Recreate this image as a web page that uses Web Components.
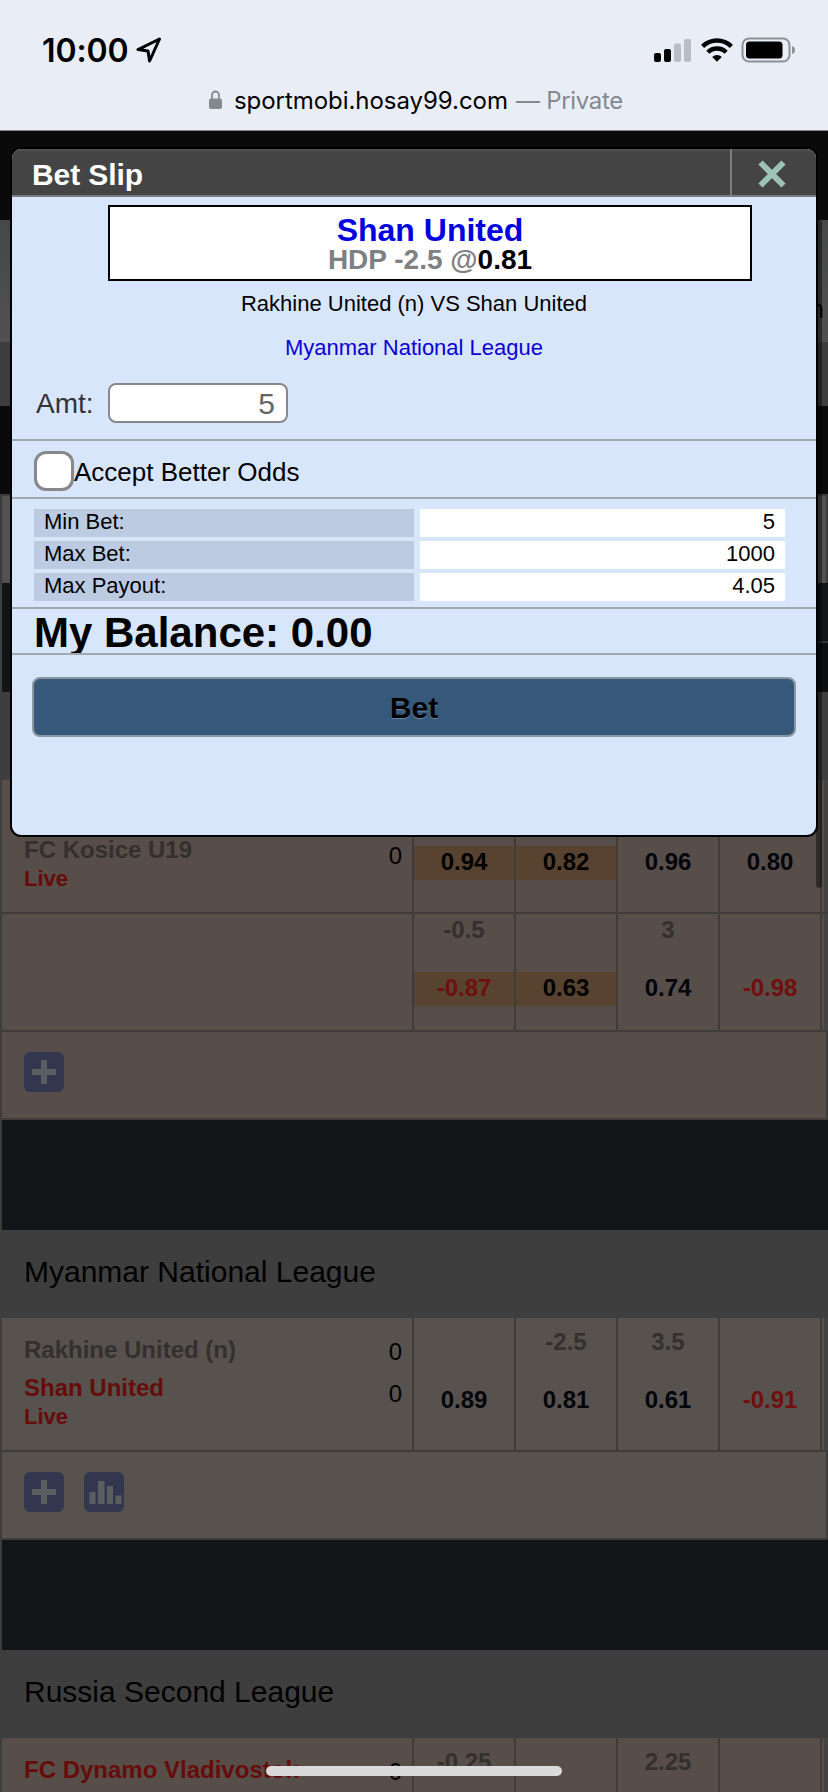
<!DOCTYPE html>
<html lang="en">
<head>
<meta charset="utf-8">
<title>Bet Slip</title>
<style>
  html {
    height: 1792px;
    overflow: hidden;
  }
  body {
    margin: 0;
    width: 828px;
    height: 1792px;
    overflow: hidden;
    position: relative;
    background: #131418;
    font-family: "Liberation Sans", Arial, sans-serif;
  }
</style>
</head>
<body>
<status-bar time="10:00" host="sportmobi.hosay99.com" mode="— Private"></status-bar>
<page-top>n</page-top>

<league-block>
  <match-row away="FC Kosice U19" away-score="0" live
    odds="|0.94|hot,|0.82|hot,|0.96|,|0.80|"></match-row>
  <match-row odds="-0.5|-0.87|hot,|0.63|hot,3|0.74|,|-0.98|" extra></match-row>
  <action-row icons="plus"></action-row>
</league-block>

<league-block name="Myanmar National League" style="--row: #57524e">
  <match-row home="Rakhine United (n)" away="Shan United" home-score="0" away-score="0" favourite="away" live
    odds="|0.89|,-2.5|0.81|,3.5|0.61|,|-0.91|"></match-row>
  <action-row icons="plus,chart"></action-row>
</league-block>

<league-block name="Russia Second League" last>
  <match-row home="FC Dynamo Vladivostok" home-score="0" favourite="home" cut
    odds="-0.25||,||,2.25||,||"></match-row>
</league-block>

<scroll-thumb></scroll-thumb>

<bet-slip heading="Bet Slip">
  <bet-pick team="Shan United" line="HDP -2.5 @" price="0.81"></bet-pick>
  <bet-match league="Myanmar National League">Rakhine United (n) VS Shan United</bet-match>
  <bet-amount value="5">Amt:</bet-amount>
  <bet-check>Accept Better Odds</bet-check>
  <bet-limits rows="Min Bet:|5,Max Bet:|1000,Max Payout:|4.05"></bet-limits>
  <bet-balance>My Balance: 0.00</bet-balance>
  <bet-button>Bet</bet-button>
</bet-slip>

<home-indicator></home-indicator>

<script>
class BaseElement extends HTMLElement {
  constructor() {
    super();
    this.attachShadow({ mode: "open" });
  }

  connectedCallback() {
    this.shadowRoot.innerHTML = this.render();
  }

  attr(name) {
    return this.getAttribute(name) || "";
  }
}

class StatusBar extends BaseElement {
  render() {
    return `
      <style>
        :host {
          display: block;
          height: 130px;
          border-bottom: 1px solid #85888c;
          background: #e9eef6;
          font-family: Inter, sans-serif;
        }
        .top {
          display: flex;
          align-items: center;
          height: 50px;
          padding: 25px 32px 0 42px;
        }
        .time {
          width: 88px;
          font-size: 32px;
          font-weight: 600;
          letter-spacing: -0.1px;
          white-space: nowrap;
        }
        .arrow { margin-left: 6px; }
        .icons { margin-left: auto; display: block; }
        .url {
          display: flex;
          align-items: center;
          height: 50px;
          padding-left: 209px;
          font-size: 24px;
          white-space: nowrap;
        }
        .host { margin-left: 12px; width: 282px; letter-spacing: -0.05px; }
        .mode { color: #85888f; letter-spacing: -0.3px; }
      </style>
      <div class="top">
        <span class="time">${this.attr("time")}</span>
        <svg class="arrow" width="26" height="26" viewBox="0 0 26 26">
          <path d="M23.500 2 L2 12.600 L12 14 L13.600 24 Z" fill="none" stroke="#000" stroke-width="3" stroke-linejoin="round"/>
        </svg>
        <svg class="icons" width="142" height="26" viewBox="0 0 142 26">
          <rect x="0" y="16" width="7" height="9" rx="2"/>
          <rect x="10" y="12" width="7" height="13" rx="2"/>
          <rect x="20" y="6.500" width="7" height="18.500" rx="2" fill="#b9bec6"/>
          <rect x="30" y="2" width="7" height="23" rx="2" fill="#b9bec6"/>
          <g fill="none" stroke="#000" stroke-width="4.400">
            <path d="M48.600 9.400 a20.500 20.500 0 0 1 28.800 0"/>
            <path d="M53.800 15.300 a13 13 0 0 1 18.400 0"/>
          </g>
          <path d="M58.200 20 a7 7 0 0 1 9.600 0 L63 24.800 Z"/>
          <rect x="88.500" y="1.500" width="47" height="23" rx="6.500" fill="none" stroke="#8d9096" stroke-width="2"/>
          <rect x="92" y="4.500" width="36.500" height="17" rx="3.500"/>
          <path d="M138 9 q3 1 3 4 t-3 4 Z" fill="#8d9096"/>
        </svg>
      </div>
      <div class="url">
        <svg width="13" height="20" viewBox="0 0 13 20">
          <path d="M3 9 V5.500 a3.500 4 0 0 1 7 0 V9" fill="none" stroke="#85888f" stroke-width="1.800"/>
          <rect y="8.500" width="13" height="10.500" rx="2" fill="#85888f"/>
        </svg>
        <span class="host">${this.attr("host")}</span>
        <span class="mode">${this.attr("mode")}</span>
      </div>
    `;
  }
}

// everything above the first visible match, mostly under the slip
class PageTop extends BaseElement {
  render() {
    return `
      <style>
        :host { display: block; }
        div { box-sizing: border-box; }
        .bar { height: 89px; background: #0a0a0a; }
        .tabs {
          height: 122px;
          padding: 75px 4px 0 0;
          text-align: right;
          font-size: 26px;
          line-height: 28px;
          background: linear-gradient(#464747, #515151);
        }
        .sub { height: 64px; background: #3d3d3d; }
        .gap { height: 88px; background: #0a0a0a; }
        .title { height: 89px; border: solid #3b3b3b; border-width: 2px 2px 0; background: #525252; }
        .head { height: 109px; border: solid #404040; border-width: 0 0 0 2px; background: linear-gradient(90deg, #131418 50%, transparent 50%), linear-gradient(#131418 0 58px, #333 58px 60px, #0e0f11 60px); }
        .league { height: 88px; background: #3e3e3e; }
      </style>
      <div class="bar"></div>
      <div class="tabs"><slot></slot></div>
      <div class="sub"></div>
      <div class="gap"></div>
      <div class="title"></div>
      <div class="head"></div>
      <div class="league"></div>
    `;
  }
}

class LeagueBlock extends BaseElement {
  render() {
    const name = this.attr("name");
    return `
      <style>
        :host { display: block; }
        h2 {
          margin: 0;
          height: 88px;
          padding-left: 24px;
          background: #3e3e3e;
          font-size: 30px;
          font-weight: normal;
          line-height: 84px;
        }
        .gap { height: 110px; border-left: 2px solid #3b3b3c; background: #131418; }
      </style>
      ${name ? `<h2>${name}</h2>` : ""}
      <slot></slot>
      ${this.hasAttribute("last") ? "" : `<div class="gap"></div>`}
    `;
  }
}

class MatchRow extends BaseElement {
  render() {
    const fav = this.attr("favourite");
    const cells = this.attr("odds").split(",").map(cell => {
      const [line, price, hot] = cell.split("|");
      const neg = price.startsWith("-") ? "neg" : "";
      return `
        <div class="cell">
          <div class="line">${line}</div>
          <div class="price ${neg} ${hot}">${price}</div>
        </div>`;
    }).join("");

    return `
      <style>
        :host {
          display: grid;
          grid-template-columns: 410px repeat(4, 102px) 8px;
          height: 132px;
          border-bottom: 2px solid #3f3d3b;
          border-left: 2px solid #3f3e3e;
          background: var(--row, #574d49);
          font-size: 24px;
          font-weight: bold;
        }
        :host([extra]) { height: 116px; }
        :host([cut]) { height: 54px; border-bottom: 0; overflow: hidden; }
        .match {
          display: flex;
          justify-content: space-between;
          padding: 13px 10px 0 22px;
        }
        .team { height: 38px; line-height: 38px; color: #33302e; }
        .match .team { white-space: nowrap; }
        .match .fav { color: #660c0a; }
        .live { font-size: 22px; line-height: 19px; color: #660c0a; }
        .score { margin-top: -1px; font-weight: normal; text-align: right; }
        .score div { height: 42px; line-height: 43px; }
        .cell {
          box-sizing: border-box;
          padding-top: 8px;
          border-left: 2px solid #3f3d3b;
          text-align: center;
          line-height: 32px;
        }
        :host([extra]) .cell { padding-top: 0; }
        .line { height: 32px; margin-bottom: 26px; color: #33302e; }
        .price { height: 34px; color: #03050b; }
        .hot { background: #574330; color: #000; }
        .neg { color: #700f0d; }
        .edge {
          border-left: 2px solid #3f3d3b;
          background: linear-gradient(90deg, transparent 2px, #454341 2px);
        }
      </style>
      <div class="match">
        <div>
          <div class="team ${fav === "home" ? "fav" : ""}">${this.attr("home")}</div>
          <div class="team ${fav === "away" ? "fav" : ""}">${this.attr("away")}</div>
          ${this.hasAttribute("live") ? `<div class="live">Live</div>` : ""}
        </div>
        <div class="score">
          <div>${this.attr("home-score")}</div>
          <div>${this.attr("away-score")}</div>
        </div>
      </div>
      ${cells}
      <div class="edge"></div>
    `;
  }
}

const ICONS = {
  plus: `<path d="M17 8 h6 v9 h9 v6 h-9 v9 h-6 v-9 h-9 v-6 h9 Z"/>`,
  chart: `<path d="M5.500 20 h6 v12 h-6 Z M14 9 h6.500 v23 h-6.500 Z M23 14 h6 v18 h-6 Z M31.500 23.500 h6 v8.500 h-6 Z"/>`
};

class ActionRow extends BaseElement {
  render() {
    return `
      <style>
        :host {
          box-sizing: border-box;
          display: flex;
          gap: 20px;
          height: 88px;
          padding: 20px 22px 0;
          border: solid #3f3d3b;
          border-width: 0 2px 2px;
          background: var(--row, #574d49);
        }
        svg { border-radius: 6px; background: #32364f; fill: #5a5e60; }
      </style>
      ${this.attr("icons").split(",").map(name =>
        `<svg width="40" height="40" viewBox="0 0 40 40">${ICONS[name]}</svg>`).join("")}
    `;
  }
}

class ScrollThumb extends BaseElement {
  render() {
    return `
      <style>
        :host {
          position: absolute;
          top: 220px;
          left: 816px;
          width: 6px;
          height: 668px;
          border-radius: 3px;
          background: rgba(0, 0, 0, 0.45);
        }
      </style>
    `;
  }
}

class BetSlip extends BaseElement {
  render() {
    return `
      <style>
        :host {
          box-sizing: border-box;
          position: absolute;
          top: 147px;
          left: 10px;
          width: 808px;
          height: 690px;
          border: 2px solid #000;
          border-radius: 11px;
          overflow: hidden;
          background: #d8e6fc;
        }
        header {
          display: flex;
          height: 46px;
          border-bottom: 2px solid #7b7d84;
          background: linear-gradient(#505050, #444 4px);
        }
        h1 {
          flex: 1;
          margin: 0;
          padding-left: 20px;
          font-size: 30px;
          letter-spacing: -0.1px;
          line-height: 51px;
          color: #fff;
        }
        .close {
          width: 84px;
          border-left: 2px solid #7b7d80;
        }
        svg { display: block; margin: 11px 0 0 26px; }
      </style>
      <header>
        <h1>${this.attr("heading")}</h1>
        <div class="close">
          <svg width="28" height="28" viewBox="0 0 28 28">
            <path d="M2.500 2.500 L25.500 25.500 M25.500 2.500 L2.500 25.500" stroke="#9cc3b5" stroke-width="6"/>
          </svg>
        </div>
      </header>
      <slot></slot>
    `;
  }
}

class BetPick extends BaseElement {
  render() {
    return `
      <style>
        :host {
          box-sizing: border-box;
          display: block;
          width: 644px;
          height: 76px;
          margin: 8px 0 0 96px;
          padding-top: 4px;
          border: 2px solid #000;
          background: #fff;
          text-align: center;
          font-weight: bold;
        }
        .team { font-size: 32px; line-height: 38px; color: #0000e0; }
        .line { font-size: 28px; line-height: 21px; color: #808080; }
        b { color: #000; }
      </style>
      <div class="team">${this.attr("team")}</div>
      <div class="line">${this.attr("line")}<b>${this.attr("price")}</b></div>
    `;
  }
}

class BetMatch extends BaseElement {
  render() {
    return `
      <style>
        :host {
          display: block;
          padding-top: 1px;
          text-align: center;
          font-size: 22px;
          line-height: 44px;
        }
        .league { color: #0a00d6; }
      </style>
      <div><slot></slot></div>
      <div class="league">${this.attr("league")}</div>
    `;
  }
}

class BetAmount extends BaseElement {
  render() {
    return `
      <style>
        :host {
          display: flex;
          height: 56px;
          padding: 13px 0 0 24px;
          border-bottom: 2px solid #a3a7b0;
          font-size: 28px;
          line-height: 41px;
          color: #303338;
        }
        label { width: 72px; }
        .field {
          box-sizing: border-box;
          width: 180px;
          height: 40px;
          padding-right: 11px;
          border: 2px solid #87888b;
          border-radius: 8px;
          background: #fff;
          text-align: right;
          font-size: 30px;
          line-height: 37px;
          color: #666;
        }
      </style>
      <label><slot></slot></label>
      <div class="field">${this.attr("value")}</div>
    `;
  }
}

class BetCheck extends BaseElement {
  render() {
    return `
      <style>
        :host {
          display: flex;
          height: 46px;
          padding: 10px 0 0 22px;
          border-bottom: 2px solid #a3a7b0;
          font-size: 26px;
          line-height: 42px;
        }
        .box {
          box-sizing: border-box;
          width: 40px;
          height: 40px;
          border: 3px solid #87888b;
          border-radius: 12px;
          background: #fff;
        }
      </style>
      <div class="box"></div>
      <slot></slot>
    `;
  }
}

class BetLimits extends BaseElement {
  render() {
    return `
      <style>
        :host {
          display: grid;
          grid-template-columns: 380px 365px;
          grid-auto-rows: 28px;
          gap: 4px 6px;
          height: 98px;
          padding: 10px 0 0 22px;
          border-bottom: 2px solid #a3a7b0;
          font-size: 22px;
          line-height: 25px;
        }
        div { background: #bccbe2; padding-left: 10px; }
        .value { background: #fff; padding-right: 10px; text-align: right; }
      </style>
      ${this.attr("rows").split(",").map(row => {
        const [label, value] = row.split("|");
        return `<div>${label}</div><div class="value">${value}</div>`;
      }).join("")}
    `;
  }
}

class BetBalance extends BaseElement {
  render() {
    return `
      <style>
        :host {
          display: block;
          height: 44px;
          padding-left: 22px;
          border-bottom: 2px solid #a3a7b0;
          overflow: hidden;
          font-size: 42px;
          font-weight: bold;
          line-height: 48px;
        }
      </style>
      <slot></slot>
    `;
  }
}

class BetButton extends BaseElement {
  render() {
    return `
      <style>
        :host { display: block; padding: 22px 20px 0; }
        button {
          display: block;
          width: 100%;
          height: 60px;
          padding: 2px 0 0;
          border: 2px solid #8b969f;
          border-radius: 8px;
          background: #36587a;
          font: bold 30px/54px "Liberation Sans", Arial, sans-serif;
          color: #000;
          text-shadow: 0 1px 1px #6d8aa8;
        }
      </style>
      <button><slot></slot></button>
    `;
  }
}

class HomeIndicator extends BaseElement {
  render() {
    return `
      <style>
        :host {
          position: absolute;
          left: 266px;
          top: 1766px;
          width: 296px;
          height: 10px;
          border-radius: 5px;
          background: #dadada;
        }
      </style>
    `;
  }
}

customElements.define("status-bar", StatusBar);
customElements.define("page-top", PageTop);
customElements.define("league-block", LeagueBlock);
customElements.define("match-row", MatchRow);
customElements.define("action-row", ActionRow);
customElements.define("scroll-thumb", ScrollThumb);
customElements.define("bet-slip", BetSlip);
customElements.define("bet-pick", BetPick);
customElements.define("bet-match", BetMatch);
customElements.define("bet-amount", BetAmount);
customElements.define("bet-check", BetCheck);
customElements.define("bet-limits", BetLimits);
customElements.define("bet-balance", BetBalance);
customElements.define("bet-button", BetButton);
customElements.define("home-indicator", HomeIndicator);
</script>
</body>
</html>
